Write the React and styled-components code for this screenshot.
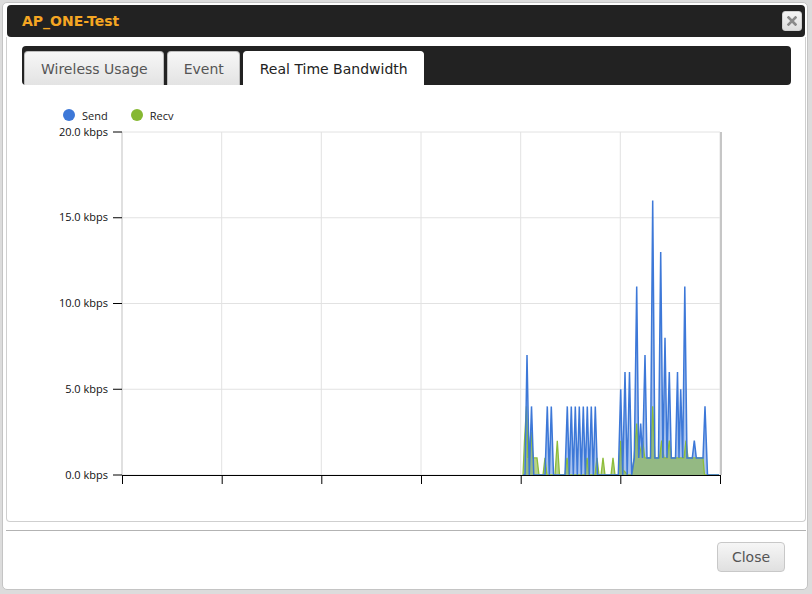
import React from 'react';
import styled, { createGlobalStyle } from 'styled-components';

const GlobalStyle = createGlobalStyle`
  body {
    margin: 0;
    background: #dcdcdc;
    font-family: "DejaVu Sans", Verdana, sans-serif;
  }
`;

const Dialog = styled.div`
  box-sizing: border-box;
  margin: 2px 0 0 2px;
  width: 806px;
  height: 588px;
  background: #fff;
  border: 1px solid #c4c4c4;
  border-radius: 5px;
  padding: 2px 1px 0 3px;
  display: flex;
  flex-direction: column;
`;

const TitleBar = styled.div`
  height: 32px;
  margin: 0 1px;
  background: #222;
  border-radius: 4px;
  display: flex;
  align-items: center;
  justify-content: space-between;
  padding: 0 3px 0 15px;
`;

const Title = styled.span`
  color: #f5a623;
  font-weight: bold;
  font-size: 14px;
`;

const CloseX = styled.div`
  width: 20px;
  height: 20px;
  box-sizing: border-box;
  border-radius: 3px;
  border: 1px solid #d0d0d0;
  background: linear-gradient(#f4f4f4, #dedede);
  display: flex;
  align-items: center;
  justify-content: center;
`;

const Panel = styled.div`
  box-sizing: border-box;
  height: 485px;
  border: 1px solid #cfcfcf;
  border-top: none;
  border-radius: 0 0 4px 4px;
  padding-top: 9px;
  display: flex;
  flex-direction: column;
`;

const TabBar = styled.div`
  box-sizing: border-box;
  height: 39px;
  margin: 0 14px 0 15px;
  background: #222;
  border-radius: 4px;
  padding: 5px 0 0 2px;
  display: flex;
  align-items: flex-end;
  gap: 3px;
`;

const Tab = styled.div`
  box-sizing: border-box;
  height: 34px;
  padding: 0 15px 0 16px;
  border-radius: 4px 4px 0 0;
  display: flex;
  align-items: center;
  font-size: 14px;
  color: ${({ active }) => (active ? '#222' : '#555')};
  background: ${({ active }) => (active ? '#fff' : 'linear-gradient(#f7f7f7, #e3e3e3)')};
  border: 1px solid ${({ active }) => (active ? '#fff' : '#bdbdbd')};
  border-bottom: none;
`;

const Legend = styled.div`
  margin-top: 23px;
  height: 14px;
  padding-left: 56px;
  display: flex;
  align-items: center;
  gap: 23px;
  font-family: "Open Sans", "Liberation Sans", sans-serif;
  font-size: 11px;
  color: #1a1a1a;
`;

const LegendItem = styled.div`
  display: flex;
  align-items: center;
  gap: 7px;
`;

const Dot = styled.span`
  width: 12px;
  height: 12px;
  border-radius: 50%;
  background: ${({ color }) => color};
`;

const Chart = styled.svg`
  display: block;
  margin-left: 33px;
  font-family: "Open Sans", "Liberation Sans", sans-serif;
`;

const Footer = styled.div`
  margin-top: 8px;
  border-top: 1px solid #b3b3b3;
  padding: 11px 21px 0 0;
  display: flex;
  justify-content: flex-end;
`;

const Button = styled.button`
  width: 68px;
  height: 30px;
  border: 1px solid #c8c8c8;
  border-radius: 4px;
  background: linear-gradient(#f6f6f6, #e0e0e0);
  color: #555;
  font-family: "DejaVu Sans", Verdana, sans-serif;
  font-size: 14px;
  padding: 0;
`;

const send = [
  [523, 0], [525, 0], [527, 7], [529.3, 0], [531.5, 4], [533.8, 0],
  [545, 0], [547.3, 4], [549.3, 0], [551.3, 4], [553.5, 0],
  [565, 0], [567.3, 4], [569.3, 0], [571.3, 4], [573.3, 0], [575.3, 4], [577.3, 0],
  [579.3, 4], [581.3, 0], [583.3, 4], [585.3, 0], [587.3, 4], [589.3, 0],
  [591.3, 4], [593.3, 0], [595.3, 4], [597.5, 0],
  [618.3, 0], [620.7, 5], [622.7, 0], [625, 6], [627.2, 0], [629.5, 6], [631.7, 0],
  [634.3, 1], [636.7, 11], [638.7, 1], [640.7, 3], [642.5, 1], [645, 7], [647, 1],
  [650.5, 1], [652.7, 16], [654.9, 1], [658.5, 1], [660.7, 13], [662.9, 1],
  [665, 8], [667, 1], [669.3, 6], [671.3, 1], [675.5, 1], [677.5, 6], [679, 1],
  [680.7, 5], [682.7, 1], [684.8, 11], [687, 1], [692.3, 1], [694.3, 2], [696.3, 1],
  [703, 1], [705, 4], [707.5, 0], [719, 0],
];

const recv = [
  [523, 0], [524.5, 2], [526.5, 4], [528, 1], [531, 2.5], [533, 1], [537, 1], [539, 0],
  [543, 0], [545, 1], [547, 0], [555, 0], [557.3, 2], [559.5, 0],
  [565, 0], [567, 1], [569, 0], [585, 0], [587, 1], [589, 0], [595, 0], [597, 1], [599, 0],
  [601, 0], [603, 1], [605, 0], [611, 0], [613, 1], [615, 0],
  [618.5, 0], [620.7, 2], [623, 0.3], [628, 0], [632, 0], [634, 1], [636.7, 3], [638.7, 1],
  [642.7, 2], [644.7, 1], [650.5, 1], [652.7, 4], [654.9, 1], [659.5, 1], [661.7, 2],
  [663.9, 1], [667.1, 1], [669.3, 2], [671.5, 1], [684, 1], [686, 2], [688, 1],
  [703, 1], [704.5, 0], [719, 0],
];

const BASE = 475;
const PX_PER_KBPS = 17.15;
const yOf = (v) => BASE - v * PX_PER_KBPS;

const linePoints = (data) => data.map(([x, v]) => `${x},${yOf(v).toFixed(1)}`).join(' ');
const areaPoints = (data) =>
  `${data[0][0]},${BASE} ${linePoints(data)} ${data[data.length - 1][0]},${BASE}`;

const yTicks = [
  { v: 20, label: '20.0 kbps' },
  { v: 15, label: '15.0 kbps' },
  { v: 10, label: '10.0 kbps' },
  { v: 5, label: '5.0 kbps' },
  { v: 0, label: '0.0 kbps' },
];

const xTicks = [122, 221.7, 321.3, 421, 520.7, 620.3, 720];

const BandwidthChart = () => (
  <Chart width="720" height="370" viewBox="40 122 720 370">
    {yTicks.map((t) => (
      <line key={t.v} x1="122" x2="720" y1={yOf(t.v)} y2={yOf(t.v)} stroke="#e2e2e2" strokeWidth="1" />
    ))}
    {xTicks.map((x) => (
      <line key={x} x1={x} x2={x} y1="132" y2="475" stroke="#e2e2e2" strokeWidth="1" />
    ))}
    <line x1="122" x2="122" y1="132" y2="475" stroke="#cfcfcf" strokeWidth="1" />
    <line x1="721" x2="721" y1="132" y2="475" stroke="#c6c6c6" strokeWidth="2" />

    <polygon points={areaPoints(send)} fill="rgba(61,120,216,0.45)" />
    <polygon points={areaPoints(recv)} fill="rgba(135,178,60,0.6)" />
    <polyline points={linePoints(recv)} fill="none" stroke="#8dbd3a" strokeWidth="1.3" />
    <polyline points={linePoints(send)} fill="none" stroke="#3d78d8" strokeWidth="1.5" />

    {yTicks.map((t) => (
      <g key={t.label}>
        <line x1="113" x2="122" y1={yOf(t.v)} y2={yOf(t.v)} stroke="#000" strokeWidth="1" />
        <text x="108" y={yOf(t.v) + 3.5} textAnchor="end" fontSize="11" fill="#111">
          {t.label}
        </text>
      </g>
    ))}
    <line x1="122" x2="720.5" y1="475.5" y2="475.5" stroke="#000" strokeWidth="1" />
    {xTicks.map((x) => (
      <line key={`t${x}`} x1={x + 0.5} x2={x + 0.5} y1="475" y2="484" stroke="#000" strokeWidth="1" />
    ))}
  </Chart>
);

const App = () => {
  return (
    <>
      <GlobalStyle />
      <Dialog>
        <TitleBar>
          <Title>AP_ONE-Test</Title>
          <CloseX>
            <svg width="10" height="10" viewBox="0 0 10 10">
              <path d="M1.5 1.5 L8.5 8.5 M8.5 1.5 L1.5 8.5" stroke="#8a8a8a" strokeWidth="2.6" strokeLinecap="square" />
            </svg>
          </CloseX>
        </TitleBar>
        <Panel>
          <TabBar>
            <Tab>Wireless Usage</Tab>
            <Tab>Event</Tab>
            <Tab active>Real Time Bandwidth</Tab>
          </TabBar>
          <Legend>
            <LegendItem><Dot color="#3d78d8" />Send</LegendItem>
            <LegendItem><Dot color="#86b832" />Recv</LegendItem>
          </Legend>
          <BandwidthChart />
        </Panel>
        <Footer>
          <Button>Close</Button>
        </Footer>
      </Dialog>
    </>
  );
};

export default App;
